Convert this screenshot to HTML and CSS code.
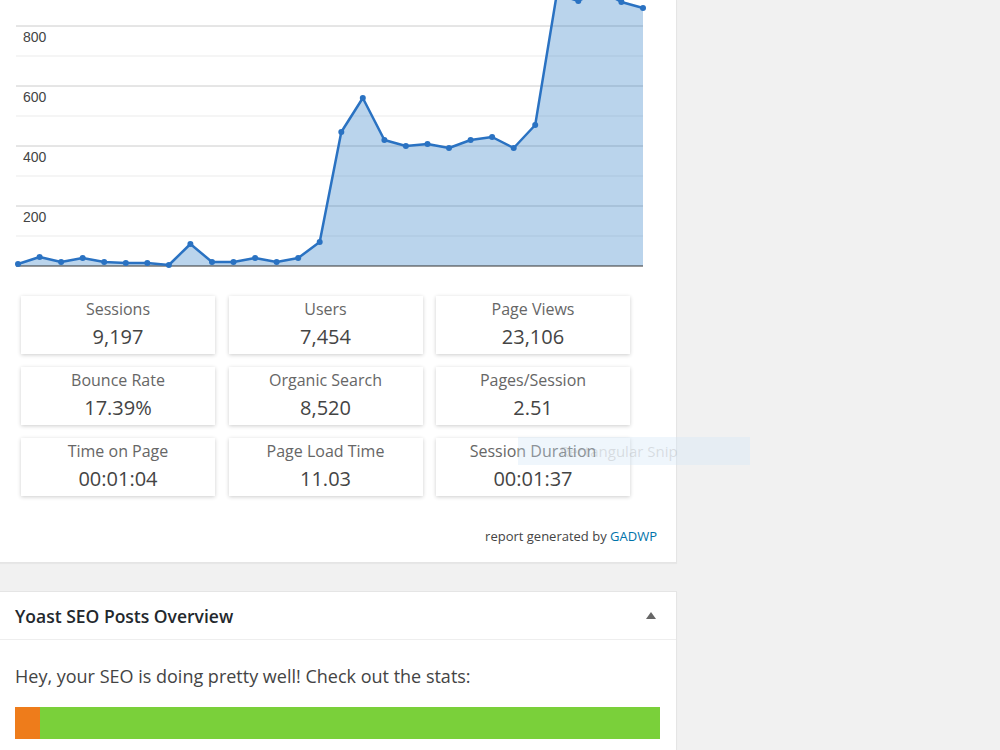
FILE: index.html
```html
<!DOCTYPE html>
<html lang="en">
<head>
  <meta charset="UTF-8" />
  <title>Dashboard</title>
  <link rel="stylesheet" href="styles.css">
</head>
<body>
  <div class="column">
    <div class="postbox analytics">
      <svg class="chart" width="660" height="270" viewBox="0 0 660 270">
        <g class="grid-minor">
          <line x1="15" y1="56" x2="642" y2="56" />
          <line x1="15" y1="116" x2="642" y2="116" />
          <line x1="15" y1="176" x2="642" y2="176" />
          <line x1="15" y1="236" x2="642" y2="236" />
        </g>
        <g class="grid-major">
          <line x1="15" y1="26" x2="642" y2="26" />
          <line x1="15" y1="86" x2="642" y2="86" />
          <line x1="15" y1="146" x2="642" y2="146" />
          <line x1="15" y1="206" x2="642" y2="206" />
        </g>
        <g class="axis-labels">
          <text x="22" y="42">800</text>
          <text x="22" y="102">600</text>
          <text x="22" y="162">400</text>
          <text x="22" y="222">200</text>
        </g>
        <polygon class="area" points="17,264 38.6,257 60.1,262 81.7,258 103.2,262 124.8,263 146.3,263 167.9,265 189.4,244 211,262 232.5,262 254.1,258 275.6,262 297.2,258 318.7,242 340.3,132 361.8,98 383.4,140 404.9,146 426.5,144 448,148 469.6,140 491.1,137 512.7,148 534.2,125 555.8,-6 577.3,1 598.9,-10 620.4,2 642,8 642,266 17,266" />
        <line class="baseline" x1="15" y1="266" x2="642" y2="266" />
        <polyline class="series" points="17,264 38.6,257 60.1,262 81.7,258 103.2,262 124.8,263 146.3,263 167.9,265 189.4,244 211,262 232.5,262 254.1,258 275.6,262 297.2,258 318.7,242 340.3,132 361.8,98 383.4,140 404.9,146 426.5,144 448,148 469.6,140 491.1,137 512.7,148 534.2,125 555.8,-6 577.3,1 598.9,-10 620.4,2 642,8" />
        <g class="dots">
          <circle cx="17" cy="264" r="3" /><circle cx="38.6" cy="257" r="3" /><circle cx="60.1" cy="262" r="3" />
          <circle cx="81.7" cy="258" r="3" /><circle cx="103.2" cy="262" r="3" /><circle cx="124.8" cy="263" r="3" />
          <circle cx="146.3" cy="263" r="3" /><circle cx="167.9" cy="265" r="3" /><circle cx="189.4" cy="244" r="3" />
          <circle cx="211" cy="262" r="3" /><circle cx="232.5" cy="262" r="3" /><circle cx="254.1" cy="258" r="3" />
          <circle cx="275.6" cy="262" r="3" /><circle cx="297.2" cy="258" r="3" /><circle cx="318.7" cy="242" r="3" />
          <circle cx="340.3" cy="132" r="3" /><circle cx="361.8" cy="98" r="3" /><circle cx="383.4" cy="140" r="3" />
          <circle cx="404.9" cy="146" r="3" /><circle cx="426.5" cy="144" r="3" /><circle cx="448" cy="148" r="3" />
          <circle cx="469.6" cy="140" r="3" /><circle cx="491.1" cy="137" r="3" /><circle cx="512.7" cy="148" r="3" />
          <circle cx="534.2" cy="125" r="3" /><circle cx="555.8" cy="-6" r="3" /><circle cx="577.3" cy="1" r="3" />
          <circle cx="598.9" cy="-10" r="3" /><circle cx="620.4" cy="2" r="3" /><circle cx="642" cy="8" r="3" />
        </g>
      </svg>

      <div class="stats">
        <div class="stat"><div class="stat-label">Sessions</div><div class="stat-value">9,197</div></div>
        <div class="stat"><div class="stat-label">Users</div><div class="stat-value">7,454</div></div>
        <div class="stat"><div class="stat-label">Page Views</div><div class="stat-value">23,106</div></div>
        <div class="stat"><div class="stat-label">Bounce Rate</div><div class="stat-value">17.39%</div></div>
        <div class="stat"><div class="stat-label">Organic Search</div><div class="stat-value">8,520</div></div>
        <div class="stat"><div class="stat-label">Pages/Session</div><div class="stat-value">2.51</div></div>
        <div class="stat"><div class="stat-label">Time on Page</div><div class="stat-value">00:01:04</div></div>
        <div class="stat"><div class="stat-label">Page Load Time</div><div class="stat-value">11.03</div></div>
        <div class="stat"><div class="stat-label">Session Duration</div><div class="stat-value">00:01:37</div></div>
      </div>

      <p class="credit">report generated by <a href="#">GADWP</a></p>
    </div>

    <div class="postbox yoast">
      <div class="postbox-header">
        <h2>Yoast SEO Posts Overview</h2>
        <span class="toggle"></span>
      </div>
      <div class="inside">
        <p>Hey, your SEO is doing pretty well! Check out the stats:</p>
        <div class="score-bar">
          <div class="score bad" style="width: 25px"></div>
          <div class="score good"></div>
        </div>
      </div>
    </div>
  </div>

  <div class="snip-ghost">Rectangular Snip</div>
</body>
</html>
```

FILE: styles.css
```css
body {
  margin: 0;
  background-color: #f1f1f1;
  font-family: "Open Sans", "Noto Sans", sans-serif;
  color: #444;
  overflow: hidden;
}
.column {
  width: 678px;
  margin-left: -1px;
}
.postbox {
  background-color: #fff;
  border: 1px solid #e5e5e5;
  box-shadow: 0 1px 1px rgba(0,0,0,0.04);
}
.analytics {
  border-top: none;
  padding-bottom: 17px;
}
.chart {
  display: block;
  margin-left: 1px;
}
.grid-minor line {
  stroke: #ebebeb;
  stroke-width: 1;
}
.grid-major line {
  stroke: #cccccc;
  stroke-width: 1;
}
.axis-labels text {
  font-family: "Liberation Sans", Arial, sans-serif;
  font-size: 14px;
  fill: #444;
}
.area {
  fill: #1c6fc0;
  fill-opacity: 0.3;
}
.baseline {
  stroke: #333;
  stroke-width: 1;
}
.series {
  fill: none;
  stroke: #2a72c2;
  stroke-width: 2.5;
  stroke-linejoin: round;
}
.dots circle {
  fill: #2a72c2;
}
.stats {
  display: grid;
  grid-template-columns: repeat(3, 194px);
  column-gap: 13.5px;
  row-gap: 13px;
  margin: 26px 0 0 21px;
}
.stat {
  height: 58px;
  background-color: #fff;
  box-shadow: 0 1px 4px rgba(0,0,0,0.2);
  text-align: center;
  padding-top: 1px;
  box-sizing: border-box;
}
.stat-label {
  font-size: 16px;
  line-height: 24px;
  color: #666;
}
.stat-value {
  font-size: 20px;
  line-height: 32px;
  color: #444;
}
.credit {
  text-align: right;
  font-size: 13px;
  margin: 31px 19px 0 0;
  line-height: 18px;
}
.credit a {
  color: #0073aa;
  text-decoration: none;
}
.yoast {
  margin-top: 28px;
}
.postbox-header {
  display: flex;
  justify-content: space-between;
  align-items: center;
  height: 47px;
  border-bottom: 1px solid #eee;
  padding: 0 20px 0 15px;
}
.postbox-header h2 {
  margin: 0;
  font-size: 17.5px;
  font-weight: 600;
  color: #23282d;
}
.toggle {
  width: 0;
  height: 0;
  border-left: 5px solid transparent;
  border-right: 5px solid transparent;
  border-bottom: 7px solid #666;
  margin-top: -1px;
}
.inside {
  padding: 24px 15px 20px;
}
.inside p {
  margin: 0 0 19px;
  font-size: 18px;
  line-height: 24px;
}
.score-bar {
  display: flex;
  width: 645px;
  height: 32px;
}
.score.bad {
  background-color: #ee7c1b;
}
.score.good {
  flex: 1;
  background-color: #7ad03a;
}
.snip-ghost {
  position: absolute;
  top: 437px;
  left: 518px;
  width: 190px;
  height: 28px;
  padding-left: 42px;
  background-color: rgba(210, 228, 245, 0.35);
  color: rgba(140, 140, 140, 0.25);
  font-size: 15px;
  line-height: 28px;
}
```
